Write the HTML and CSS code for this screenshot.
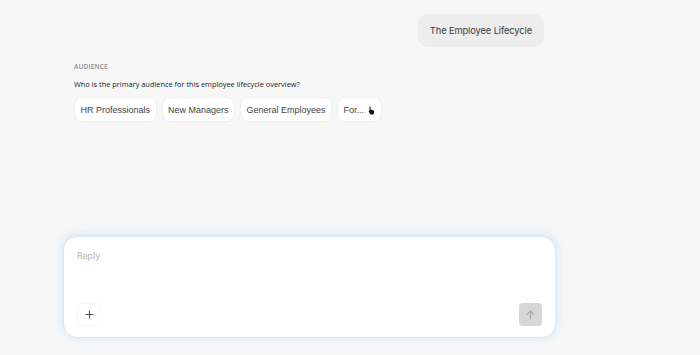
FILE: index.html
```html
<!DOCTYPE html>
<html lang="en">
<head>
    <meta charset="UTF-8">
    <meta name="viewport" content="width=device-width, initial-scale=1.0">
    <title>The Employee Lifecycle</title>
    <link rel="stylesheet" href="styles.css">
</head>
<body>
    <div class="chat">
        <div class="thread">
            <div class="user-row">
                <div class="user-bubble">The Employee Lifecycle</div>
            </div>

            <div class="question">
                <div class="question-label">Audience</div>
                <div class="question-text">Who is the primary audience for this employee lifecycle overview?</div>
                <div class="options">
                    <button class="option">HR Professionals</button>
                    <button class="option">New Managers</button>
                    <button class="option">General Employees</button>
                    <button class="option option-more">For...
                        <svg class="cursor" width="7" height="9" viewBox="0 0 7 9">
                            <path d="M1.5 0.5 L2.6 0.5 L2.6 3.6 L5.2 4.3 Q6.3 4.6 6.1 5.8 L5.6 8.5 L2.3 8.5 L0.6 5.2 L1.5 4.8 L1.5 0.5 Z" fill="#111"/>
                        </svg>
                    </button>
                </div>
            </div>
        </div>

        <div class="composer">
            <div class="composer-input">Reply</div>
            <div class="composer-actions">
                <button class="btn-add">
                    <svg width="9" height="9" viewBox="0 0 9 9">
                        <path d="M4.5 0.5 V8.5 M0.5 4.5 H8.5" stroke="#555" stroke-width="1.1"/>
                    </svg>
                </button>
                <button class="btn-send">
                    <svg width="9" height="10" viewBox="0 0 9 10">
                        <path d="M4.5 9.5 V1 M1 4.5 L4.5 1 L8 4.5" stroke="#a9a9a9" stroke-width="1.2" fill="none"/>
                    </svg>
                </button>
            </div>
        </div>
    </div>
</body>
</html>
```

FILE: styles.css
```css
* {
    margin: 0;
    padding: 0;
    box-sizing: border-box;
}

body {
    font-family: 'Open Sans', 'Liberation Sans', sans-serif;
    background: #f7f7f7;
    color: #333;
    width: 700px;
    height: 355px;
    overflow: hidden;
}

.chat {
    width: 493px;
    height: 355px;
    margin-left: 63px;
    display: flex;
    flex-direction: column;
}

.thread {
    flex: 1;
    padding: 14px 12px 0 11px;
}

.user-row {
    display: flex;
    justify-content: flex-end;
}

.user-bubble {
    background: #ededed;
    border-radius: 10px;
    height: 33px;
    padding: 0 12px;
    display: flex;
    align-items: center;
    font-family: 'Inter', sans-serif;
    font-size: 9.3px;
    color: #3a3a3a;
    letter-spacing: -0.1px;
}

.question {
    margin-top: 16px;
}

.question-label {
    font-size: 6.5px;
    font-weight: 600;
    text-transform: uppercase;
    color: #8c8c8c;
    letter-spacing: 0.2px;
    line-height: 8px;
}

.question-text {
    margin-top: 8px;
    font-size: 7.4px;
    color: #222;
    line-height: 10px;
}

.options {
    margin-top: 8px;
    display: flex;
    gap: 5px;
}

.option {
    height: 25px;
    padding: 0 5.5px;
    background: #fff;
    border: 1px solid #efefef;
    border-radius: 8px;
    font-family: 'Liberation Sans', sans-serif;
    font-size: 9px;
    color: #444;
    display: flex;
    align-items: center;
}

.option-more {
    gap: 4px;
    padding-right: 6px;
}

.cursor {
    margin-top: 2px;
}

.composer {
    height: 102px;
    margin-bottom: 17px;
    background: #fff;
    border: 1px solid #d8e8f4;
    border-radius: 14px;
    box-shadow: 0 -1px 10px rgba(160, 205, 235, 0.45);
    display: flex;
    flex-direction: column;
    justify-content: space-between;
    padding: 12px 13px 11px 13px;
}

.composer-input {
    font-size: 9px;
    color: #b0b0b0;
}

.composer-actions {
    display: flex;
    justify-content: space-between;
}

.btn-add {
    width: 24px;
    height: 23px;
    background: #fff;
    border: 1px solid #f6f6f6;
    border-radius: 5px;
    display: flex;
    align-items: center;
    justify-content: center;
}

.btn-send {
    width: 23px;
    height: 23px;
    background: #d7d7d7;
    border: none;
    border-radius: 4px;
    display: flex;
    align-items: center;
    justify-content: center;
}
```
